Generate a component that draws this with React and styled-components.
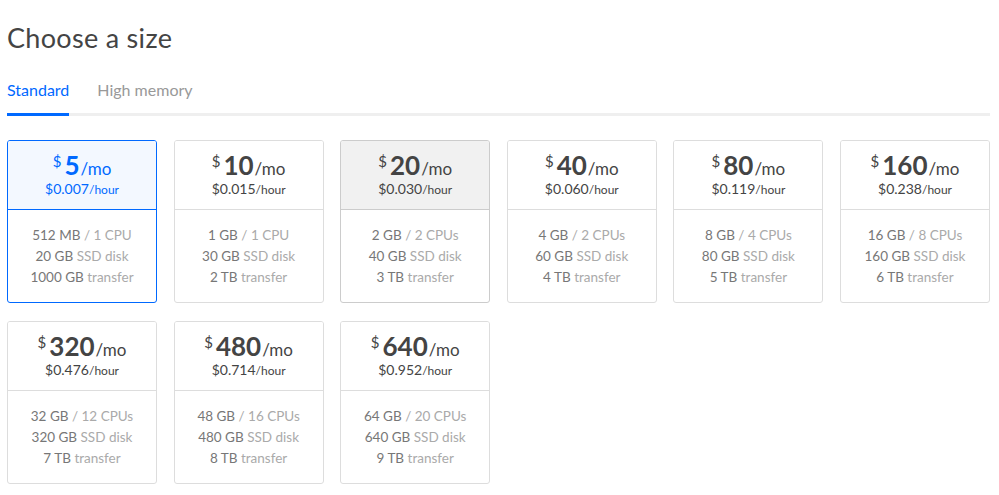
import React from "react";
import styled, { createGlobalStyle } from "styled-components";

const Global = createGlobalStyle`
  body {
    margin: 0;
    background: #fff;
    font-family: Lato, "Open Sans", sans-serif;
  }
`;

const Page = styled.div`
  width: 983px;
  padding: 0 7px;
`;

const Title = styled.h1`
  margin: 0;
  padding-top: 22px;
  font-size: 27px;
  font-weight: 400;
  color: #444;
  line-height: 32px;
  letter-spacing: 0.3px;
`;

const Tabs = styled.div`
  display: flex;
  gap: 28px;
  margin-top: 26px;
  border-bottom: 3px solid #efefef;
`;

const Tab = styled.div`
  font-size: 16px;
  line-height: 20px;
  padding-bottom: 13px;
  margin-bottom: -3px;
  color: ${(p) => (p.$active ? "#0069ff" : "#999")};
  border-bottom: 3px solid ${(p) => (p.$active ? "#0069ff" : "transparent")};
`;

const Grid = styled.div`
  display: grid;
  grid-template-columns: repeat(6, 1fr);
  column-gap: 16.6px;
  row-gap: 18px;
  margin-top: 24px;
`;

const Card = styled.div`
  border: 1px solid ${(p) => (p.$selected ? "#0069ff" : p.$hover ? "#ccc" : "#ddd")};
  border-radius: 3px;
  overflow: hidden;
  height: 161px;
  display: flex;
  flex-direction: column;
`;

const Head = styled.div`
  height: 69px;
  flex-shrink: 0;
  border-bottom: 1px solid ${(p) => (p.$selected ? "#0069ff" : p.$hover ? "#ccc" : "#ddd")};
  background: ${(p) => (p.$selected ? "#f3f8ff" : p.$hover ? "#f1f1f1" : "#fff")};
  color: ${(p) => (p.$selected ? "#0069ff" : "#444")};
  display: flex;
  flex-direction: column;
  align-items: center;
  padding-top: 12px;
  box-sizing: border-box;
`;

const Price = styled.div`
  display: flex;
  align-items: baseline;
  line-height: 24px;
`;

const Dollar = styled.span`
  font-size: 15px;
  align-self: flex-start;
  margin-right: 3px;
  line-height: 16px;
`;

const Amount = styled.span`
  font-size: 26px;
  font-weight: 700;
`;

const Per = styled.span`
  font-size: 17px;
  margin-left: 1px;
`;

const Hourly = styled.div`
  font-size: 14px;
  line-height: 16px;
  & span {
    font-size: 12px;
  }
`;

const Body = styled.div`
  flex: 1;
  display: flex;
  flex-direction: column;
  align-items: center;
  padding-top: 15px;
  font-size: 13.5px;
  line-height: 21px;
  color: #aaa;
  & b {
    font-weight: 400;
    color: #777;
  }
`;

const plans = [
  ["5", "0.007", "512 MB", "1 CPU", "20 GB", "1000 GB"],
  ["10", "0.015", "1 GB", "1 CPU", "30 GB", "2 TB"],
  ["20", "0.030", "2 GB", "2 CPUs", "40 GB", "3 TB"],
  ["40", "0.060", "4 GB", "2 CPUs", "60 GB", "4 TB"],
  ["80", "0.119", "8 GB", "4 CPUs", "80 GB", "5 TB"],
  ["160", "0.238", "16 GB", "8 CPUs", "160 GB", "6 TB"],
  ["320", "0.476", "32 GB", "12 CPUs", "320 GB", "7 TB"],
  ["480", "0.714", "48 GB", "16 CPUs", "480 GB", "8 TB"],
  ["640", "0.952", "64 GB", "20 CPUs", "640 GB", "9 TB"],
];

export default function App() {
  return (
    <Page>
      <Global />
      <Title>Choose a size</Title>
      <Tabs>
        <Tab $active>Standard</Tab>
        <Tab>High memory</Tab>
      </Tabs>
      <Grid>
        {plans.map(([mo, hr, mem, cpu, disk, tx], i) => {
          const sel = i === 0;
          const hov = i === 2;
          return (
            <Card key={mo} $selected={sel} $hover={hov}>
              <Head $selected={sel} $hover={hov}>
                <Price>
                  <Dollar>$</Dollar>
                  <Amount>{mo}</Amount>
                  <Per>/mo</Per>
                </Price>
                <Hourly>
                  ${hr}
                  <span>/hour</span>
                </Hourly>
              </Head>
              <Body>
                <div>
                  <b>{mem}</b> / {cpu}
                </div>
                <div>
                  <b>{disk}</b> SSD disk
                </div>
                <div>
                  <b>{tx}</b> transfer
                </div>
              </Body>
            </Card>
          );
        })}
      </Grid>
    </Page>
  );
}
